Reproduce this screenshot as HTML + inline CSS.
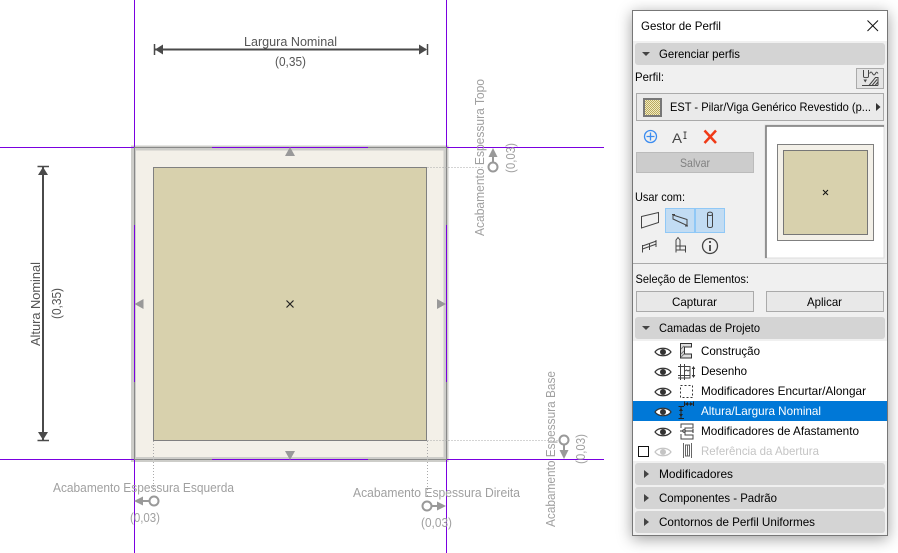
<!DOCTYPE html>
<html>
<head>
<meta charset="utf-8">
<style>
html,body{margin:0;padding:0;width:898px;height:553px;overflow:hidden;background:#fff}
#sh{position:absolute;left:632px;top:10px;width:256px;height:526px;box-shadow:0 3px 14px rgba(0,0,0,.38)}
svg{position:absolute;left:0;top:0}
text{font-family:"Liberation Sans",sans-serif;font-size:12px;fill:#000}
.d{fill:#555;font-size:13px}
.g{fill:#a0a0a0;font-size:13px}
.ic{fill:none;stroke:#444;stroke-width:1}
</style>
</head>
<body>
<div id="sh"></div>
<svg width="898" height="553" viewBox="0 0 898 553">
<defs>
<pattern id="chk" width="2" height="2" patternUnits="userSpaceOnUse"><rect width="2" height="2" fill="#f2ecc0"/><rect width="1" height="1" fill="#b9a860"/><rect x="1" y="1" width="1" height="1" fill="#b9a860"/></pattern>
<g id="eye"><path d="M-8 0C-4.500 -5 4.500 -5 8 0C4.500 5 -4.500 5 -8 0Z" fill="#fff" stroke="#333" stroke-width="1.200"/><circle r="3" fill="#333"/></g>
<g id="eyeg"><path d="M-8 0C-4.500 -5 4.500 -5 8 0C4.500 5 -4.500 5 -8 0Z" fill="#fff" stroke="#c4c4c4" stroke-width="1.200"/><circle r="3" fill="#c4c4c4"/></g>
</defs>

<!-- Drawing -->
<rect x="134" y="148" width="312" height="311" fill="#f3f0e8"/>
<rect x="133.500" y="148" width="312.500" height="311.500" fill="none" stroke="#cdcdc9" stroke-width="5"/>
<path d="M134.500 0V553M446.500 0V553M0 147.500H604M0 459.500H604" fill="none" stroke="#7a00e0" stroke-width="1"/>
<path d="M134.500 147V225M134.500 382V460M446.500 147V225M446.500 382V460M135 147.500H212M368 147.500H446M135 459.500H212M368 459.500H446" fill="none" stroke="#888" stroke-width="1"/>
<rect x="153.500" y="167.500" width="273" height="273" fill="#d8d1ad" stroke="#808080"/>
<path d="M286.500 300.500l7 7M293.500 300.500l-7 7" stroke="#222" stroke-width="1.200"/>
<path d="M290 147l5 9h-10zM290 460l5 -9h-10zM134.500 304l9 -5v10zM446 304l-9 -5v10z" fill="#999"/>
<path d="M427.500 167.500H484M427.500 440.500H558M153.500 441V490M427.500 441V496" fill="none" stroke="#aaa" stroke-dasharray="1 2"/>

<!-- Width dimension -->
<path d="M155 49.500H426" stroke="#4a4a4a" stroke-width="2"/>
<path d="M154.500 44V55M427.500 44V55" stroke="#4a4a4a" stroke-width="1.500"/>
<path d="M155 49.500l8 -5v10zM427 49.500l-8 -5v10z" fill="#4a4a4a"/>
<text class="d" x="244" y="46" textLength="93" lengthAdjust="spacingAndGlyphs">Largura Nominal</text>
<text class="d" x="275" y="66" textLength="31" lengthAdjust="spacingAndGlyphs">(0,35)</text>

<!-- Height dimension -->
<path d="M43 167V440" stroke="#4a4a4a" stroke-width="2"/>
<path d="M37.500 166.500H49M37.500 440.500H49" stroke="#4a4a4a" stroke-width="1.500"/>
<path d="M43 167l5 8h-10zM43 440l5 -8h-10z" fill="#4a4a4a"/>
<text class="d" transform="translate(40,346) rotate(-90)" textLength="84" lengthAdjust="spacingAndGlyphs">Altura Nominal</text>
<text class="d" transform="translate(61,319) rotate(-90)" textLength="31" lengthAdjust="spacingAndGlyphs">(0,35)</text>

<!-- Finish handles -->
<text class="g" transform="translate(484,236) rotate(-90)" textLength="157" lengthAdjust="spacingAndGlyphs">Acabamento Espessura Topo</text>
<text class="g" transform="translate(515,173) rotate(-90)" textLength="30" lengthAdjust="spacingAndGlyphs">(0,03)</text>
<circle cx="493" cy="167" r="4.500" fill="none" stroke="#999" stroke-width="2"/>
<path d="M493 162V155" stroke="#999" stroke-width="2"/><path d="M493 148l4.500 9h-9z" fill="#999"/>

<text class="g" transform="translate(555,527) rotate(-90)" textLength="156" lengthAdjust="spacingAndGlyphs">Acabamento Espessura Base</text>
<text class="g" transform="translate(585,464) rotate(-90)" textLength="30" lengthAdjust="spacingAndGlyphs">(0,03)</text>
<circle cx="564" cy="440" r="4.500" fill="none" stroke="#999" stroke-width="2"/>
<path d="M564 445V452" stroke="#999" stroke-width="2"/><path d="M564 459l4.500 -9h-9z" fill="#999"/>

<text class="g" x="353" y="497" textLength="167" lengthAdjust="spacingAndGlyphs">Acabamento Espessura Direita</text>
<text class="g" x="421" y="527" textLength="31" lengthAdjust="spacingAndGlyphs">(0,03)</text>
<circle cx="427" cy="506" r="4.500" fill="none" stroke="#999" stroke-width="2"/>
<path d="M432 506H440" stroke="#999" stroke-width="2"/><path d="M446 506l-9 -4.500v9z" fill="#999"/>

<text class="g" x="53" y="492" textLength="181" lengthAdjust="spacingAndGlyphs">Acabamento Espessura Esquerda</text>
<text class="g" x="130" y="522" textLength="30" lengthAdjust="spacingAndGlyphs">(0,03)</text>
<circle cx="154" cy="501" r="4.500" fill="none" stroke="#999" stroke-width="2"/>
<path d="M149 501H141" stroke="#999" stroke-width="2"/><path d="M134 501l9 -4.500v9z" fill="#999"/>

<!-- Panel -->
<rect x="632.500" y="10.500" width="255" height="525" fill="#f0f0f0" stroke="#777"/>
<rect x="633" y="11" width="254" height="30" fill="#fff"/>
<text x="641" y="30" textLength="80" lengthAdjust="spacingAndGlyphs">Gestor de Perfil</text>
<path d="M867.500 20.500l10.500 10.500M878 20.500l-10.500 10.500" stroke="#111" stroke-width="1"/>

<rect x="635" y="43" width="250" height="22" rx="3" fill="#d4d4d4"/>
<path d="M642 52h8l-4 4z" fill="#444"/>
<text x="659" y="58" textLength="81" lengthAdjust="spacingAndGlyphs">Gerenciar perfis</text>
<text x="635" y="81" textLength="29" lengthAdjust="spacingAndGlyphs">Perfil:</text>

<rect x="856.500" y="68.500" width="27" height="20" fill="#e4e4e4" stroke="#aaa"/>
<path d="M863.500 70V76.500C863.500 78 868.500 78 868.500 76.500V70M869.500 73.500c1.200 -2 2 -2 3 0s2 2 3 0 1.500 -1.500 2.500 0" class="ic"/>
<path d="M862 85.500H878M869 85.500L875.500 77.500H878V85.500M872 85.500L877 79.500M875 85.500L878 82" class="ic"/>
<path d="M863.500 79.500h3.500l-1.750 3z" fill="#444"/>

<rect x="636.500" y="93.500" width="247" height="27" fill="#eaeaea" stroke="#aaa"/>
<rect x="644" y="99" width="17" height="17" fill="url(#chk)" stroke="#777" stroke-width="2"/>
<text x="670" y="111" textLength="201" lengthAdjust="spacingAndGlyphs">EST - Pilar/Viga Genérico Revestido (p...</text>
<path d="M876 103l4.500 4 -4.500 4z" fill="#333"/>

<!-- action icons -->
<circle cx="650.500" cy="136.500" r="6" fill="none" stroke="#3b8cf0" stroke-width="1.300"/>
<path d="M650.500 132.500V140.500M646.500 136.500H654.500" stroke="#3b8cf0" stroke-width="1.300"/>
<text x="672" y="143" style="font-size:14px;fill:#444" textLength="10" lengthAdjust="spacingAndGlyphs">A</text>
<path d="M683.500 132h3M685 132V138.500M683.500 138.500h3" stroke="#444" stroke-width="1" fill="none"/>
<path d="M704.500 130.500L716 143M716 130.500L704.500 143" stroke="#f03a17" stroke-width="2.500"/>

<rect x="636.500" y="152.500" width="117" height="20" fill="#ccc" stroke="#bbb"/>
<text x="680" y="167" style="fill:#808080" textLength="30" lengthAdjust="spacingAndGlyphs">Salvar</text>

<text x="635" y="201" textLength="50" lengthAdjust="spacingAndGlyphs">Usar com:</text>
<rect x="665.500" y="208.500" width="29" height="24" fill="#c2dcf3" stroke="#90c8f6"/>
<rect x="695.500" y="208.500" width="29" height="24" fill="#c2dcf3" stroke="#90c8f6"/>
<path class="ic" d="M641.500 216.500L658.500 212.500V222.500L641.500 228Z"/>
<path class="ic" d="M673 215L687 219.500V225.500L673 219ZM672 214.500H675M685 226H688"/>
<path class="ic" d="M707.500 214C707.500 211.500 712.500 211.500 712.500 214V226C712.500 228 707.500 228 707.500 226ZM707.500 214C707.500 216 712.500 216 712.500 214"/>
<path class="ic" d="M642.500 246L656.500 241M642.500 249L656.500 244M642.500 245V252.500M649.500 243.500V250M656 240V247"/>
<path class="ic" d="M676 252.500V240L678 237.500L680 240V246M676 246H685.500V252.500M680 246V250M676 250H685.500"/>
<circle cx="710" cy="246" r="7.500" fill="none" stroke="#444" stroke-width="1.300"/>
<path d="M710 245V251" stroke="#444" stroke-width="1.800"/><circle cx="710" cy="242" r="1.100" fill="#444"/>

<!-- preview -->
<rect x="765" y="125" width="119" height="133" fill="#fff" stroke="#ddd"/>
<path d="M766 258V126H884" fill="none" stroke="#777" stroke-width="1.500"/>
<rect x="777.500" y="144.500" width="96" height="96" fill="#f3f0e8" stroke="#808080"/>
<rect x="783.500" y="150.500" width="84" height="84" fill="#d8d1ad" stroke="#777"/>
<path d="M823 190l5 5M828 190l-5 5" stroke="#111"/>

<path d="M633 263.500H887" stroke="#aaa"/>
<text x="635.500" y="283" textLength="113.500" lengthAdjust="spacingAndGlyphs">Seleção de Elementos:</text>
<rect x="636.500" y="291.500" width="117" height="20" fill="#e8e8e8" stroke="#aaa"/>
<rect x="766.500" y="291.500" width="117" height="20" fill="#e8e8e8" stroke="#aaa"/>
<text x="672" y="306" textLength="45" lengthAdjust="spacingAndGlyphs">Capturar</text>
<text x="807" y="306" textLength="35" lengthAdjust="spacingAndGlyphs">Aplicar</text>

<rect x="635" y="317" width="250" height="22" rx="3" fill="#d4d4d4"/>
<path d="M642 326h8l-4 4z" fill="#444"/>
<text x="659" y="332" textLength="101" lengthAdjust="spacingAndGlyphs">Camadas de Projeto</text>

<!-- list -->
<rect x="633" y="341" width="254" height="120" fill="#fff"/>
<rect x="633" y="401" width="254" height="20" fill="#0078d7"/>
<use href="#eye" x="663" y="352"/><use href="#eye" x="663" y="372"/><use href="#eye" x="663" y="392"/><use href="#eye" x="663" y="412"/><use href="#eye" x="663" y="432"/><use href="#eyeg" x="663" y="452"/>
<text x="701" y="355" textLength="59" lengthAdjust="spacingAndGlyphs">Construção</text>
<text x="701" y="375" textLength="46" lengthAdjust="spacingAndGlyphs">Desenho</text>
<text x="701" y="395" textLength="165" lengthAdjust="spacingAndGlyphs">Modificadores Encurtar/Alongar</text>
<text x="701" y="415" style="fill:#fff" textLength="120" lengthAdjust="spacingAndGlyphs">Altura/Largura Nominal</text>
<text x="701" y="435" textLength="158" lengthAdjust="spacingAndGlyphs">Modificadores de Afastamento</text>
<text x="701" y="455" style="fill:#c4c4c4" textLength="118" lengthAdjust="spacingAndGlyphs">Referência da Abertura</text>

<!-- list icons -->
<path d="M680.500 343.500H691.500V347H684.500V354H691.500V358H680.500Z" fill="#ddd" stroke="#333"/>
<path d="M681 349l3 -3M681 354l3 -3M681 357l3 -3" stroke="#777" fill="none"/>
<path class="ic" d="M680.500 364V380M684.500 364V380M678 366.500H690V378H678M678 375.500H690M685 371l1.500 -1 1.500 1 1.500 -1"/>
<path d="M693.500 368V376" stroke="#333"/><path d="M693.500 366l1.800 3h-3.600zM693.500 378l1.800 -3h-3.600z" fill="#333"/>
<rect x="680.500" y="385.500" width="12" height="12" fill="none" stroke="#333" stroke-dasharray="2 2"/>
<path d="M678.500 406.500H684M678.500 418.500H684M681 407V418" stroke="#222" fill="none"/>
<path d="M681 408l2 3h-4zM681 417l2 -3h-4z" fill="#222"/>
<path d="M684.500 401.500V406M693.500 401.500V406M685 404H693" stroke="#222" fill="none"/>
<path d="M685 404l3 -2v4zM693 404l-3 -2v4z" fill="#222"/>
<path class="ic" d="M681 428V424H693V428H685V435H693V439H681V434"/>
<path d="M680 431H693" stroke="#333"/><circle cx="684" cy="431" r="1.200" fill="#fff" stroke="#333"/><path d="M693 429V433" stroke="#333"/>
<path d="M683.500 443V458M691.500 443V458M685.500 445H689.500V456H685.500ZM687.500 445V456" fill="none" stroke="#666"/>
<rect x="638.500" y="446.500" width="10" height="10" fill="#fff" stroke="#111"/>

<!-- collapsed headers -->
<rect x="635" y="463" width="250" height="22" rx="3" fill="#d4d4d4"/>
<rect x="635" y="487" width="250" height="22" rx="3" fill="#d4d4d4"/>
<rect x="635" y="511" width="250" height="22" rx="3" fill="#d4d4d4"/>
<path d="M644 470l5 4 -5 4zM644 494l5 4 -5 4zM644 518l5 4 -5 4z" fill="#444"/>
<text x="659" y="478" textLength="74" lengthAdjust="spacingAndGlyphs">Modificadores</text>
<text x="659" y="502" textLength="118" lengthAdjust="spacingAndGlyphs">Componentes - Padrão</text>
<text x="659" y="526" textLength="156" lengthAdjust="spacingAndGlyphs">Contornos de Perfil Uniformes</text>
</svg>
</body>
</html>
